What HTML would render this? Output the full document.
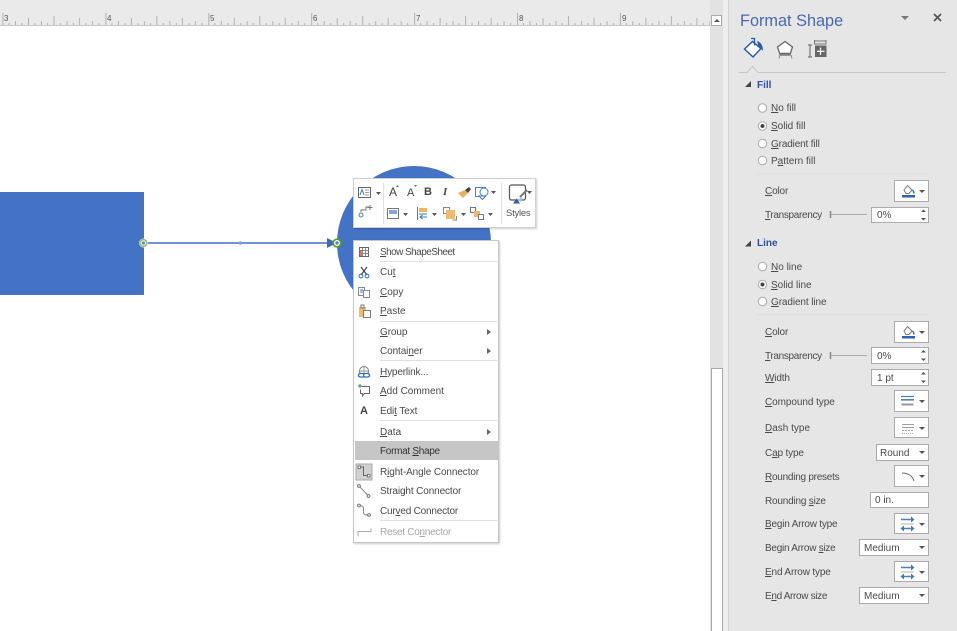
<!DOCTYPE html>
<html><head><meta charset="utf-8">
<style>
html,body{margin:0;padding:0}
body{width:957px;height:631px;overflow:hidden;position:relative;background:#fff;font-family:"Liberation Sans",sans-serif;font-size:10px;color:#4a4a4a}
.t{position:absolute;white-space:nowrap;line-height:12px;margin-top:1px}
.a{position:absolute;box-sizing:border-box}
.box{position:absolute;box-sizing:border-box;background:#fff;border:1px solid #ababab}
.sep{position:absolute;height:1px;background:#e1e1e1}
.m{color:#4a4a4a;left:380px}
.v{position:absolute;line-height:12px;color:#4a4a4a;white-space:nowrap;margin-top:1px}
.l{left:765px;letter-spacing:-.15px}
svg{position:absolute;overflow:visible}
.dd{position:absolute;width:0;height:0;border-left:3px solid transparent;border-right:3px solid transparent;border-top:3px solid #555}
</style></head><body>

<!-- ruler -->
<div class="a" style="left:0;top:0;width:710px;height:26px;background:#eaeaea"></div>
<svg style="left:0;top:0" width="711" height="27">
<defs><pattern id="r" x="2.5" y="0" width="102.9" height="27" patternUnits="userSpaceOnUse">
<path d="M.5 13V25M26 18V25M51.5 16V25M77 18V25M13 21V25M39 21V25M64.5 21V25M90 21V25M6.5 23V25M19.5 23V25M32.5 23V25M45 23V25M58 23V25M71 23V25M83.5 23V25M96.5 23V25" stroke="#b0b0b0" stroke-width="1" fill="none"/></pattern></defs>
<rect width="710" height="27" fill="url(#r)"/>
<rect y="25" width="710" height="1" fill="#c8c8c8"/>
</svg>
<div class="t" style="left:4px;top:12px;font-size:8px;color:#555">3</div>
<div class="t" style="left:107px;top:12px;font-size:8px;color:#555">4</div>
<div class="t" style="left:210px;top:12px;font-size:8px;color:#555">5</div>
<div class="t" style="left:313px;top:12px;font-size:8px;color:#555">6</div>
<div class="t" style="left:416px;top:12px;font-size:8px;color:#555">7</div>
<div class="t" style="left:519px;top:12px;font-size:8px;color:#555">8</div>
<div class="t" style="left:622px;top:12px;font-size:8px;color:#555">9</div>

<!-- scrollbar -->
<div class="a" style="left:710px;top:0;width:13px;height:631px;background:#e2e2e2"></div>
<div class="a" style="left:711px;top:15px;width:11px;height:11px;background:#fff;border:1px solid #ababab"></div>
<div class="a" style="left:714px;top:19px;border-left:3px solid transparent;border-right:3px solid transparent;border-bottom:3px solid #555"></div>
<div class="a" style="left:711px;top:368px;width:12px;height:263px;background:#fff;border:1px solid #a8a8a8;border-bottom:0"></div>
<div class="a" style="left:723px;top:0;width:5px;height:631px;background:#eeeeee"></div>
<div class="a" style="left:728px;top:0;width:1px;height:631px;background:#d2d2d2"></div>

<!-- shapes -->
<div class="a" style="left:0;top:192px;width:144px;height:103px;background:#4472c4"></div>
<svg style="left:0;top:0" width="711" height="631">
<circle cx="414" cy="243" r="77" fill="#4472c4"/>
<path d="M148 243H328" stroke="#5b85d3" stroke-width="1.8"/>
<path d="M327 238L337 243L327 248Z" fill="#3f6cb8"/>
<circle cx="143.500" cy="243" r="4.500" fill="#fff"/>
<circle cx="143.500" cy="243" r="3.500" fill="#dfe9d2" stroke="#8dbb5a" stroke-width="1.300"/>
<circle cx="143.500" cy="243" r="1.500" fill="#5b85d3"/>
<circle cx="240.500" cy="243" r="1.800" fill="#7ba2ea"/>
<circle cx="337" cy="243" r="3.800" fill="#fff" stroke="#5c9e10" stroke-width="1.700"/>
<circle cx="337" cy="243" r="1.700" fill="#4a86e8"/>
</svg>

<!-- mini toolbar -->
<div class="a" style="left:353px;top:178px;width:183px;height:50px;background:#fff;border:1px solid #d0d0d0;box-shadow:1px 1px 2px rgba(0,0,0,.2)"></div>
<div class="a" style="left:383px;top:183px;width:1px;height:41px;background:#e1e1e1"></div>
<div class="a" style="left:501px;top:183px;width:1px;height:41px;background:#e1e1e1"></div>
<svg style="left:0;top:0" width="600" height="240" fill="none">
<rect x="358.500" y="187.500" width="12" height="10" stroke="#666" fill="#fff"/><path d="M365 190H369M365 192.500H369M365 195H369" stroke="#999"/><path d="M360 195L362 189.500L364 195" stroke="#3a74c4"/>
<path d="M376 192h5l-2.500 3z" fill="#555"/>
<path d="M361 212V210H366V207H369" stroke="#777"/><circle cx="361" cy="215" r="2" stroke="#4a7ebf" fill="#fff"/><path d="M370 205v5M367.500 207.500h5" stroke="#777"/>
<rect x="387.500" y="208.500" width="11" height="10" stroke="#777" fill="#fff"/><rect x="389" y="210" width="8" height="4" fill="#7fa8d8"/>
<path d="M403 213h5l-2.500 3z" fill="#555"/>
<path d="M417.500 207V220" stroke="#777"/><rect x="419" y="208" width="8" height="4" fill="#eeb766"/><path d="M419 214h8M427 217h-7m2.500-2l-2.500 2 2.500 2" stroke="#3a74c4"/>
<path d="M432 213h5l-2.500 3z" fill="#555"/>
<rect x="443.500" y="207.500" width="6" height="6" stroke="#888"/><rect x="446" y="210" width="9" height="9" fill="#eebb70"/><path d="M456.500 216v4h-4" stroke="#888"/>
<path d="M461 213h5l-2.500 3z" fill="#555"/>
<rect x="470.500" y="207.500" width="5" height="5" stroke="#777"/><rect x="474" y="211" width="6" height="6" fill="#eebb70"/><rect x="478.500" y="214.500" width="5" height="5" stroke="#777" fill="#fff"/>
<path d="M488 213h5l-2.500 3z" fill="#555"/>
<path d="M458 193l7-3 3 3-5 5-2-2z" fill="#e8b060"/><path d="M465 190l4-3 2 2-3 4z" fill="#444"/>
<rect x="475.500" y="187.500" width="10" height="9" stroke="#4a7ebf"/><circle cx="484" cy="192" r="4" stroke="#4a7ebf" fill="#fff"/><path d="M479 196l3.500 3.500 3-3.500z" stroke="#4a7ebf" fill="#fff"/>
<path d="M491 191h5l-2.500 3z" fill="#555"/>
<rect x="509.500" y="185" width="16" height="15" rx="2" stroke="#555" stroke-width="1.200"/><path d="M520 197l7-7" stroke="#777" stroke-width="2"/><path d="M513 203.500l3.500-5 3.500 5z" fill="#2f5ea8"/><path d="M518 200l3-3 2 2-3 3z" fill="#9cc0e8"/>
<path d="M527 191h5l-2.500 3z" fill="#555"/>
<path d="M396 187l1.500-2 1.500 2z" fill="#3a74c4"/><path d="M414 185h3l-1.500 2z" fill="#3a74c4"/>
</svg>
<div class="t" style="left:389px;top:185px;font-size:12px;color:#444">A</div>
<div class="t" style="left:407px;top:186px;font-size:11px;color:#444">A</div>
<div class="t" style="left:424px;top:185px;font-size:11px;font-weight:bold;color:#444">B</div>
<div class="t" style="left:443px;top:185px;font-size:11px;font-style:italic;font-family:'Liberation Serif',serif;font-weight:bold;color:#444">I</div>
<div class="t" style="left:506px;top:207px;font-size:9.500px;letter-spacing:-.25px;color:#555">Styles</div>

<!-- context menu -->
<div class="a" style="left:353px;top:240px;width:146px;height:303px;background:#fff;border:1px solid #c6c6c6;box-shadow:1px 1px 2px rgba(0,0,0,.2)"></div>
<div class="sep" style="left:380px;top:261px;width:117px"></div>
<div class="sep" style="left:380px;top:321px;width:117px"></div>
<div class="sep" style="left:380px;top:360px;width:117px"></div>
<div class="sep" style="left:380px;top:420px;width:117px"></div>
<div class="sep" style="left:380px;top:520px;width:117px"></div>
<div class="a" style="left:355px;top:441px;width:143px;height:19px;background:#c6c6c6"></div>

<div class="t m" style="top:246px;letter-spacing:-.55px"><u>S</u>how ShapeSheet</div>
<div class="t m" style="top:266px"><span>Cu<u>t</u></span></div>
<div class="t m" style="top:286px"><u>C</u>opy</div>
<div class="t m" style="top:305px"><u>P</u>aste</div>
<div class="t m" style="top:326px;letter-spacing:-.1px"><u>G</u>roup</div>
<div class="t m" style="top:345px;letter-spacing:-.1px">Contai<u>n</u>er</div>
<div class="t m" style="top:366px;letter-spacing:-.15px"><u>H</u>yperlink...</div>
<div class="t m" style="top:385px"><u>A</u>dd Comment</div>
<div class="t m" style="top:405px;letter-spacing:-.1px">Edi<u>t</u> Text</div>
<div class="t m" style="top:426px"><u>D</u>ata</div>
<div class="t m" style="top:445px;color:#333;letter-spacing:-.3px">Format <u>S</u>hape</div>
<div class="t m" style="top:466px;letter-spacing:-.1px">R<u>i</u>ght-Angle Connector</div>
<div class="t m" style="top:485px;letter-spacing:-.12px">Strai<u>g</u>ht Connector</div>
<div class="t m" style="top:505px;letter-spacing:-.2px">Cur<u>v</u>ed Connector</div>
<div class="t m" style="top:526px;color:#a6a6a6;letter-spacing:-.27px">Reset Co<u>n</u>nector</div>

<div class="a" style="left:487px;top:329px;border-left:4px solid #666;border-top:3px solid transparent;border-bottom:3px solid transparent"></div>
<div class="a" style="left:487px;top:348px;border-left:4px solid #666;border-top:3px solid transparent;border-bottom:3px solid transparent"></div>
<div class="a" style="left:487px;top:429px;border-left:4px solid #666;border-top:3px solid transparent;border-bottom:3px solid transparent"></div>

<svg style="left:0;top:0" width="500" height="560" fill="none">
<rect x="359.500" y="247.500" width="9" height="9" stroke="#666"/><path d="M359 250.500h10M359 253.500h10M362.500 248v8M365.500 248v8" stroke="#888"/><rect x="360" y="251" width="2" height="5" fill="#d77"/>
<path d="M361 267l6 8M367 267l-6 8" stroke="#444" stroke-width="1.200"/><circle cx="361" cy="276" r="1.900" stroke="#2f6fb8"/><circle cx="367" cy="276" r="1.900" stroke="#2f6fb8"/>
<rect x="358.500" y="287.500" width="6" height="8" stroke="#888"/><rect x="363.500" y="290.500" width="6" height="7" stroke="#888" fill="#fff"/><path d="M360 290h3M360 292h3" stroke="#3a74c4"/>
<rect x="359" y="307" width="7" height="10" fill="#eebb70"/><rect x="361" y="305" width="3" height="3" stroke="#777"/><rect x="363.500" y="310.500" width="7" height="7" stroke="#777" fill="#fff"/>
<circle cx="364" cy="371" r="4.500" stroke="#777"/><path d="M359.500 371h9M364 366.500v9" stroke="#999"/><rect x="358.500" y="373.500" width="6" height="3.500" rx="1.700" stroke="#2f6fb8" fill="#fff" stroke-width="1.300"/><rect x="363.500" y="373.500" width="6" height="3.500" rx="1.700" stroke="#2f6fb8" fill="#fff" stroke-width="1.300"/>
<path d="M362 386.500h7.500v7h-5l-2 2.500v-2.500h-2v-4" stroke="#666"/><path d="M360 384v4M358 386h4" stroke="#2a8a60"/>
<rect x="356" y="464" width="16" height="16" fill="#d0d0d0" stroke="#aaa"/>
<path d="M360 467h3.500v8.500h5" stroke="#666"/><rect x="358" y="466" width="2.500" height="2.500" stroke="#777" fill="#fff"/><rect x="367.500" y="474.500" width="2.500" height="2.500" stroke="#777" fill="#fff"/>
<path d="M360 487l8 8.500" stroke="#888"/><circle cx="359" cy="486" r="1.400" stroke="#777" fill="#fff"/><circle cx="368.500" cy="496" r="1.400" stroke="#777" fill="#fff"/>
<path d="M360 506c6-1 2 6 4 8 1 1 2 1 4 1" stroke="#888"/><circle cx="359" cy="505.500" r="1.400" stroke="#777" fill="#fff"/><circle cx="369" cy="515" r="1.400" stroke="#777" fill="#fff"/>
<path d="M358 536v-4.500h13v-3" stroke="#aaa"/>
</svg>
<div class="t" style="left:360px;top:404px;font-size:11px;font-weight:bold;color:#444">A</div>

<!-- pane -->
<div class="a" style="left:729px;top:0;width:228px;height:631px;background:#e6e6e6"></div>
<div class="t" style="left:740px;top:10px;font-size:16.300px;line-height:20px;color:#4a68ad">Format Shape</div>
<div class="a" style="left:901px;top:16px;border-left:4px solid transparent;border-right:4px solid transparent;border-top:4px solid #777"></div>
<svg style="left:0;top:0" width="957" height="631" fill="none">
<path d="M934 14l7 7M941 14l-7 7" stroke="#555" stroke-width="1.700"/>
<!-- fill icon -->
<path d="M744.500 49L752.500 41.500 761 48.500 753 57z" fill="#fff" stroke="#2a5ca8" stroke-width="1.500"/><path d="M751 38.500h3.500v7" stroke="#2a5ca8" stroke-width="1.300"/><path d="M757 41c3.500 1 6 4 6 10-1.500-2-2.500-3-4-3z" fill="#2a5ca8"/>
<!-- pentagon -->
<path d="M785 41.500l7.500 5.500-2.700 8h-9.600l-2.700-8z" fill="#fff" stroke="#666" stroke-width="1.300"/><path d="M780 55l-1 3.500M791 55l1 3.500" stroke="#888"/><path d="M780.500 53.500h9" stroke="#666" stroke-width="1.500"/>
<!-- size -->
<path d="M810 45v12M808 45h4M808 57h4" stroke="#777" stroke-width="1.200"/><path d="M814 41h12.500M814 44h12.500M814.500 40v4M826 40v4" stroke="#777"/><rect x="815" y="45.500" width="11.500" height="11.500" fill="#666"/><path d="M820.500 47.500v7.500M817 51.300h7.500" stroke="#eee" stroke-width="1.300"/>
<!-- tab line -->
<path d="M739 72.500H747L752.500 66.500L758 72.500H946" stroke="#c6c6c6"/>
<path d="M745 87h6v-6z" fill="#444"/>
<path d="M745 246.500h6v-6z" fill="#444"/>
<g stroke="#ababab" fill="#fff"><circle cx="762.500" cy="108" r="4.200"/><circle cx="762.500" cy="126" r="4.200"/><circle cx="762.500" cy="143.500" r="4.200"/><circle cx="762.500" cy="160.500" r="4.200"/><circle cx="762.500" cy="266.500" r="4.200"/><circle cx="762.500" cy="284.500" r="4.200"/><circle cx="762.500" cy="301.500" r="4.200"/></g>
<circle cx="762.500" cy="126" r="2" fill="#444"/><circle cx="762.500" cy="284.500" r="2" fill="#444"/>
<path d="M757 174h172M757 314.500h172" stroke="#dedede"/>
<path d="M830.500 211v7M830.500 352v7" stroke="#888" stroke-width="1.500"/><path d="M831 214.500h36M831 355.500h36" stroke="#aaa"/>
</svg>

<div class="t" style="left:757px;top:79px;font-weight:bold;color:#2f4f9c">Fill</div>
<div class="t" style="left:757px;top:237px;font-weight:bold;color:#2f4f9c">Line</div>

<div class="t" style="left:771px;top:102px"><u>N</u>o fill</div>
<div class="t" style="left:771px;top:120px"><u>S</u>olid fill</div>
<div class="t" style="left:771px;top:138px;letter-spacing:-.15px"><u>G</u>radient fill</div>
<div class="t" style="left:771px;top:155px">P<u>a</u>ttern fill</div>
<div class="t" style="left:771px;top:261px"><u>N</u>o line</div>
<div class="t" style="left:771px;top:279px"><u>S</u>olid line</div>
<div class="t" style="left:771px;top:296px;letter-spacing:-.1px"><u>G</u>radient line</div>

<div class="t l" style="top:185px"><u>C</u>olor</div>
<div class="t l" style="top:209px;letter-spacing:-.33px"><u>T</u>ransparency</div>
<div class="t l" style="top:326px"><u>C</u>olor</div>
<div class="t l" style="top:350px;letter-spacing:-.33px"><u>T</u>ransparency</div>
<div class="t l" style="top:372px"><u>W</u>idth</div>
<div class="t l" style="top:396px;letter-spacing:-.07px"><u>C</u>ompound type</div>
<div class="t l" style="top:422px;letter-spacing:0"><u>D</u>ash type</div>
<div class="t l" style="top:447px"><span>C<u>a</u>p type</span></div>
<div class="t l" style="top:471px;letter-spacing:-.25px"><u>R</u>ounding presets</div>
<div class="t l" style="top:495px;letter-spacing:-.2px">Rounding <u>s</u>ize</div>
<div class="t l" style="top:518px;letter-spacing:-.2px"><u>B</u>egin Arrow type</div>
<div class="t l" style="top:542px;letter-spacing:-.25px">Begin Arrow <u>s</u>ize</div>
<div class="t l" style="top:566px"><u>E</u>nd Arrow type</div>
<div class="t l" style="top:590px;letter-spacing:-.33px">E<u>n</u>d Arrow size</div>

<!-- icon buttons -->
<div class="box" style="left:894px;top:180px;width:35px;height:22px"></div>
<div class="box" style="left:894px;top:321px;width:35px;height:22px"></div>
<div class="box" style="left:894px;top:390px;width:35px;height:22px"></div>
<div class="box" style="left:894px;top:417px;width:35px;height:21px"></div>
<div class="box" style="left:894px;top:465px;width:35px;height:22px"></div>
<div class="box" style="left:894px;top:513px;width:35px;height:21px"></div>
<div class="box" style="left:894px;top:561px;width:35px;height:21px"></div>
<div class="dd" style="left:919px;top:190px"></div>
<div class="dd" style="left:919px;top:331px"></div>
<div class="dd" style="left:919px;top:400px"></div>
<div class="dd" style="left:919px;top:427px"></div>
<div class="dd" style="left:919px;top:475px"></div>
<div class="dd" style="left:919px;top:523px"></div>
<div class="dd" style="left:919px;top:571px"></div>

<svg style="left:0;top:0" width="957" height="631" fill="none">
<path d="M904 190l3.500-4.500 4.500 4.500-3 3.500h-3z" stroke="#777" fill="#fff"/><path d="M912.500 190c1 1 2 2 1 3.500" stroke="#2f6fb8" stroke-width="1.500"/><rect x="902" y="195" width="13" height="2.500" fill="#2f5eb8"/>
<path d="M904 331l3.500-4.500 4.500 4.500-3 3.500h-3z" stroke="#777" fill="#fff"/><path d="M912.500 331c1 1 2 2 1 3.500" stroke="#2f6fb8" stroke-width="1.500"/><rect x="902" y="336" width="13" height="2.500" fill="#2f5eb8"/>
<path d="M901 396.500h13" stroke="#4a7ebf" stroke-width="1.200"/><path d="M901 399.800h13" stroke="#4a7ebf" stroke-width="1.600"/><path d="M901.500 404.500h12" stroke="#999" stroke-width="2"/>
<path d="M902 424.500h12M902 427.500h12" stroke="#a0a0a0"/><path d="M902 430.500h12" stroke="#aaa" stroke-dasharray="2 1"/><path d="M902 433.500h12" stroke="#aaa" stroke-dasharray="1 1"/>
<path d="M902 473c6 0 10 2 12 8" stroke="#666"/>
<g><path d="M901 519.500h11M903 528.500h9" stroke="#4a7ebf" stroke-width="1.500"/><path d="M911 516.500l3.500 3-3.500 3zM904 525.500l-3.500 3 3.500 3zM911 525.500l3.500 3-3.500 3z" fill="#3f78c0"/><path d="M901 524h13" stroke="#b0b0b0"/></g>
<g transform="translate(0,48)"><path d="M901 519.500h11M903 528.500h9" stroke="#4a7ebf" stroke-width="1.500"/><path d="M911 516.500l3.500 3-3.500 3zM904 525.500l-3.500 3 3.500 3zM911 525.500l3.500 3-3.500 3z" fill="#3f78c0"/><path d="M901 524h13" stroke="#b0b0b0"/></g>
</svg>

<!-- spinners -->
<div class="box" style="left:871px;top:207px;width:58px;height:16px"></div>
<div class="v" style="left:877px;top:209px">0%</div>
<div class="box" style="left:871px;top:347px;width:58px;height:17px"></div>
<div class="v" style="left:877px;top:350px">0%</div>
<div class="box" style="left:871px;top:369px;width:58px;height:17px"></div>
<div class="v" style="left:877px;top:372px">1 pt</div>
<svg style="left:0;top:0" width="957" height="631">
<path d="M921 212l2.500-2.500 2.500 2.500zM921 218l2.500 2.500 2.500-2.500z" fill="#555"/>
<path d="M921 352.500l2.500-2.500 2.500 2.500zM921 358.500l2.500 2.500 2.500-2.500z" fill="#555"/>
<path d="M921 374.500l2.500-2.500 2.500 2.500zM921 380.500l2.500 2.500 2.500-2.500z" fill="#555"/>
</svg>

<!-- dropdowns -->
<div class="box" style="left:876px;top:444px;width:53px;height:17px"></div>
<div class="v" style="left:880px;top:447px">Round</div>
<div class="dd" style="left:919px;top:451px"></div>
<div class="box" style="left:870px;top:492px;width:59px;height:16px"></div>
<div class="v" style="left:875px;top:494px">0 in.</div>
<div class="box" style="left:859px;top:539px;width:70px;height:17px"></div>
<div class="v" style="left:864px;top:542px">Medium</div>
<div class="dd" style="left:919px;top:546px"></div>
<div class="box" style="left:859px;top:587px;width:70px;height:17px"></div>
<div class="v" style="left:864px;top:590px">Medium</div>
<div class="dd" style="left:919px;top:594px"></div>

</body></html>
